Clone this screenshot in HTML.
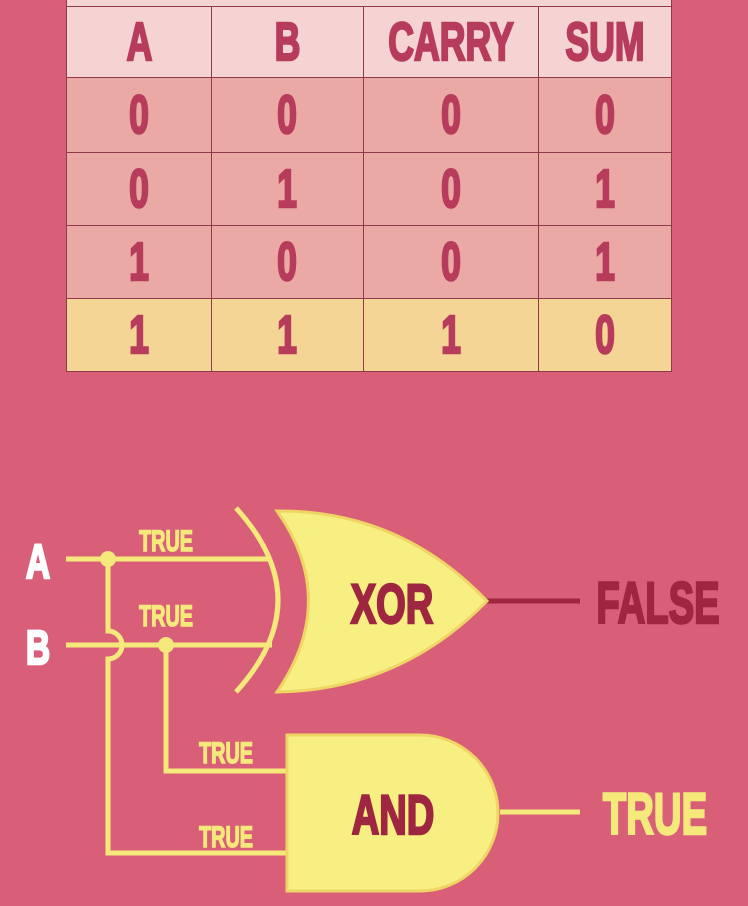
<!DOCTYPE html>
<html><head><meta charset="utf-8"><style>
html,body{margin:0;padding:0;}
body{width:748px;height:906px;overflow:hidden;background:#d95f79;position:relative;font-family:"Liberation Sans",sans-serif;}
.t{position:absolute;left:66px;top:0;width:606px;height:372px;}
.c{position:absolute;display:flex;align-items:center;justify-content:center;box-sizing:border-box;border:1.5px solid #8e3a48;color:#b73c5b;font-weight:bold;font-size:54px;-webkit-text-stroke:2.5px #b73c5b;}
.c span{display:inline-block;transform:scaleX(0.66);}
svg{position:absolute;left:0;top:0;}
</style></head><body>
<div class="t">
<div class="c" style="left:0;top:-2px;width:606px;height:9px;background:#f4d3d2"></div>
<div class="c" style="left:0;top:6px;width:146px;height:72px;background:#f4d3d2"><span>A</span></div>
<div class="c" style="left:145px;top:6px;width:153px;height:72px;background:#f4d3d2"><span>B</span></div>
<div class="c" style="left:297px;top:6px;width:176px;height:72px;background:#f4d3d2"><span>CARRY</span></div>
<div class="c" style="left:472px;top:6px;width:134px;height:72px;background:#f4d3d2"><span>SUM</span></div>
<div class="c" style="left:0;top:77px;width:146px;height:76px;background:#eba9a6"><span>0</span></div>
<div class="c" style="left:145px;top:77px;width:153px;height:76px;background:#eba9a6"><span>0</span></div>
<div class="c" style="left:297px;top:77px;width:176px;height:76px;background:#eba9a6"><span>0</span></div>
<div class="c" style="left:472px;top:77px;width:134px;height:76px;background:#eba9a6"><span>0</span></div>
<div class="c" style="left:0;top:152px;width:146px;height:74px;background:#eba9a6"><span>0</span></div>
<div class="c" style="left:145px;top:152px;width:153px;height:74px;background:#eba9a6"><span>1</span></div>
<div class="c" style="left:297px;top:152px;width:176px;height:74px;background:#eba9a6"><span>0</span></div>
<div class="c" style="left:472px;top:152px;width:134px;height:74px;background:#eba9a6"><span>1</span></div>
<div class="c" style="left:0;top:225px;width:146px;height:74px;background:#eba9a6"><span>1</span></div>
<div class="c" style="left:145px;top:225px;width:153px;height:74px;background:#eba9a6"><span>0</span></div>
<div class="c" style="left:297px;top:225px;width:176px;height:74px;background:#eba9a6"><span>0</span></div>
<div class="c" style="left:472px;top:225px;width:134px;height:74px;background:#eba9a6"><span>1</span></div>
<div class="c" style="left:0;top:298px;width:146px;height:74px;background:#f5d595"><span>1</span></div>
<div class="c" style="left:145px;top:298px;width:153px;height:74px;background:#f5d595"><span>1</span></div>
<div class="c" style="left:297px;top:298px;width:176px;height:74px;background:#f5d595"><span>1</span></div>
<div class="c" style="left:472px;top:298px;width:134px;height:74px;background:#f5d595"><span>0</span></div>
</div>
<svg width="748" height="906" viewBox="0 0 748 906">
<g fill="none" stroke="#f6e97c" stroke-width="5">
<path d="M66 559 H268"/>
<path d="M66 645 H272"/>
<path d="M108 559 V631 A14 14 0 0 1 108 659 V853 H290"/>
<path d="M166 645 V771 H290"/>
<path d="M236 508 Q320 600 236 692"/>
<path d="M500 812 H580"/>
</g>
<path d="M485 601 H580" stroke="#9e2640" stroke-width="5"/>
<circle cx="108" cy="559" r="8" fill="#f6e97c"/>
<circle cx="166" cy="645" r="8" fill="#f6e97c"/>
<path d="M277 511 Q400 510 487 601 Q400 690 277 692 Q340 600 277 511 Z" fill="#f8ef82" stroke="#eed564" stroke-width="3"/>
<path d="M287 735 H420 A78 78 0 0 1 420 891 H287 Z" fill="#f8ef82" stroke="#eed564" stroke-width="3"/>
<g font-family="Liberation Sans, sans-serif" font-weight="bold">
<g fill="#fff" stroke="#fff" stroke-width="2.5" font-size="48" text-anchor="middle">
<text transform="translate(38 578) scale(0.7 1)">A</text>
<text transform="translate(38 664) scale(0.7 1)">B</text>
</g>
<g fill="#f6e97c" stroke="#f6e97c" stroke-width="1.5" font-size="30" text-anchor="middle">
<text transform="translate(166 551) scale(0.66 1)">TRUE</text>
<text transform="translate(166 626) scale(0.66 1)">TRUE</text>
<text transform="translate(226 763) scale(0.66 1)">TRUE</text>
<text transform="translate(226 847) scale(0.66 1)">TRUE</text>
<text transform="translate(655 834) scale(0.66 1)" font-size="58" stroke-width="2.5">TRUE</text>
</g>
<g fill="#9e2640" stroke="#9e2640" stroke-width="2.5" font-size="58" text-anchor="middle">
<text transform="translate(658 623) scale(0.66 1)">FALSE</text>
<text transform="translate(392 623) scale(0.68 1)" font-size="56">XOR</text>
<text transform="translate(393 834) scale(0.68 1)" font-size="56">AND</text>
</g>
</g>
</svg>
</body></html>
